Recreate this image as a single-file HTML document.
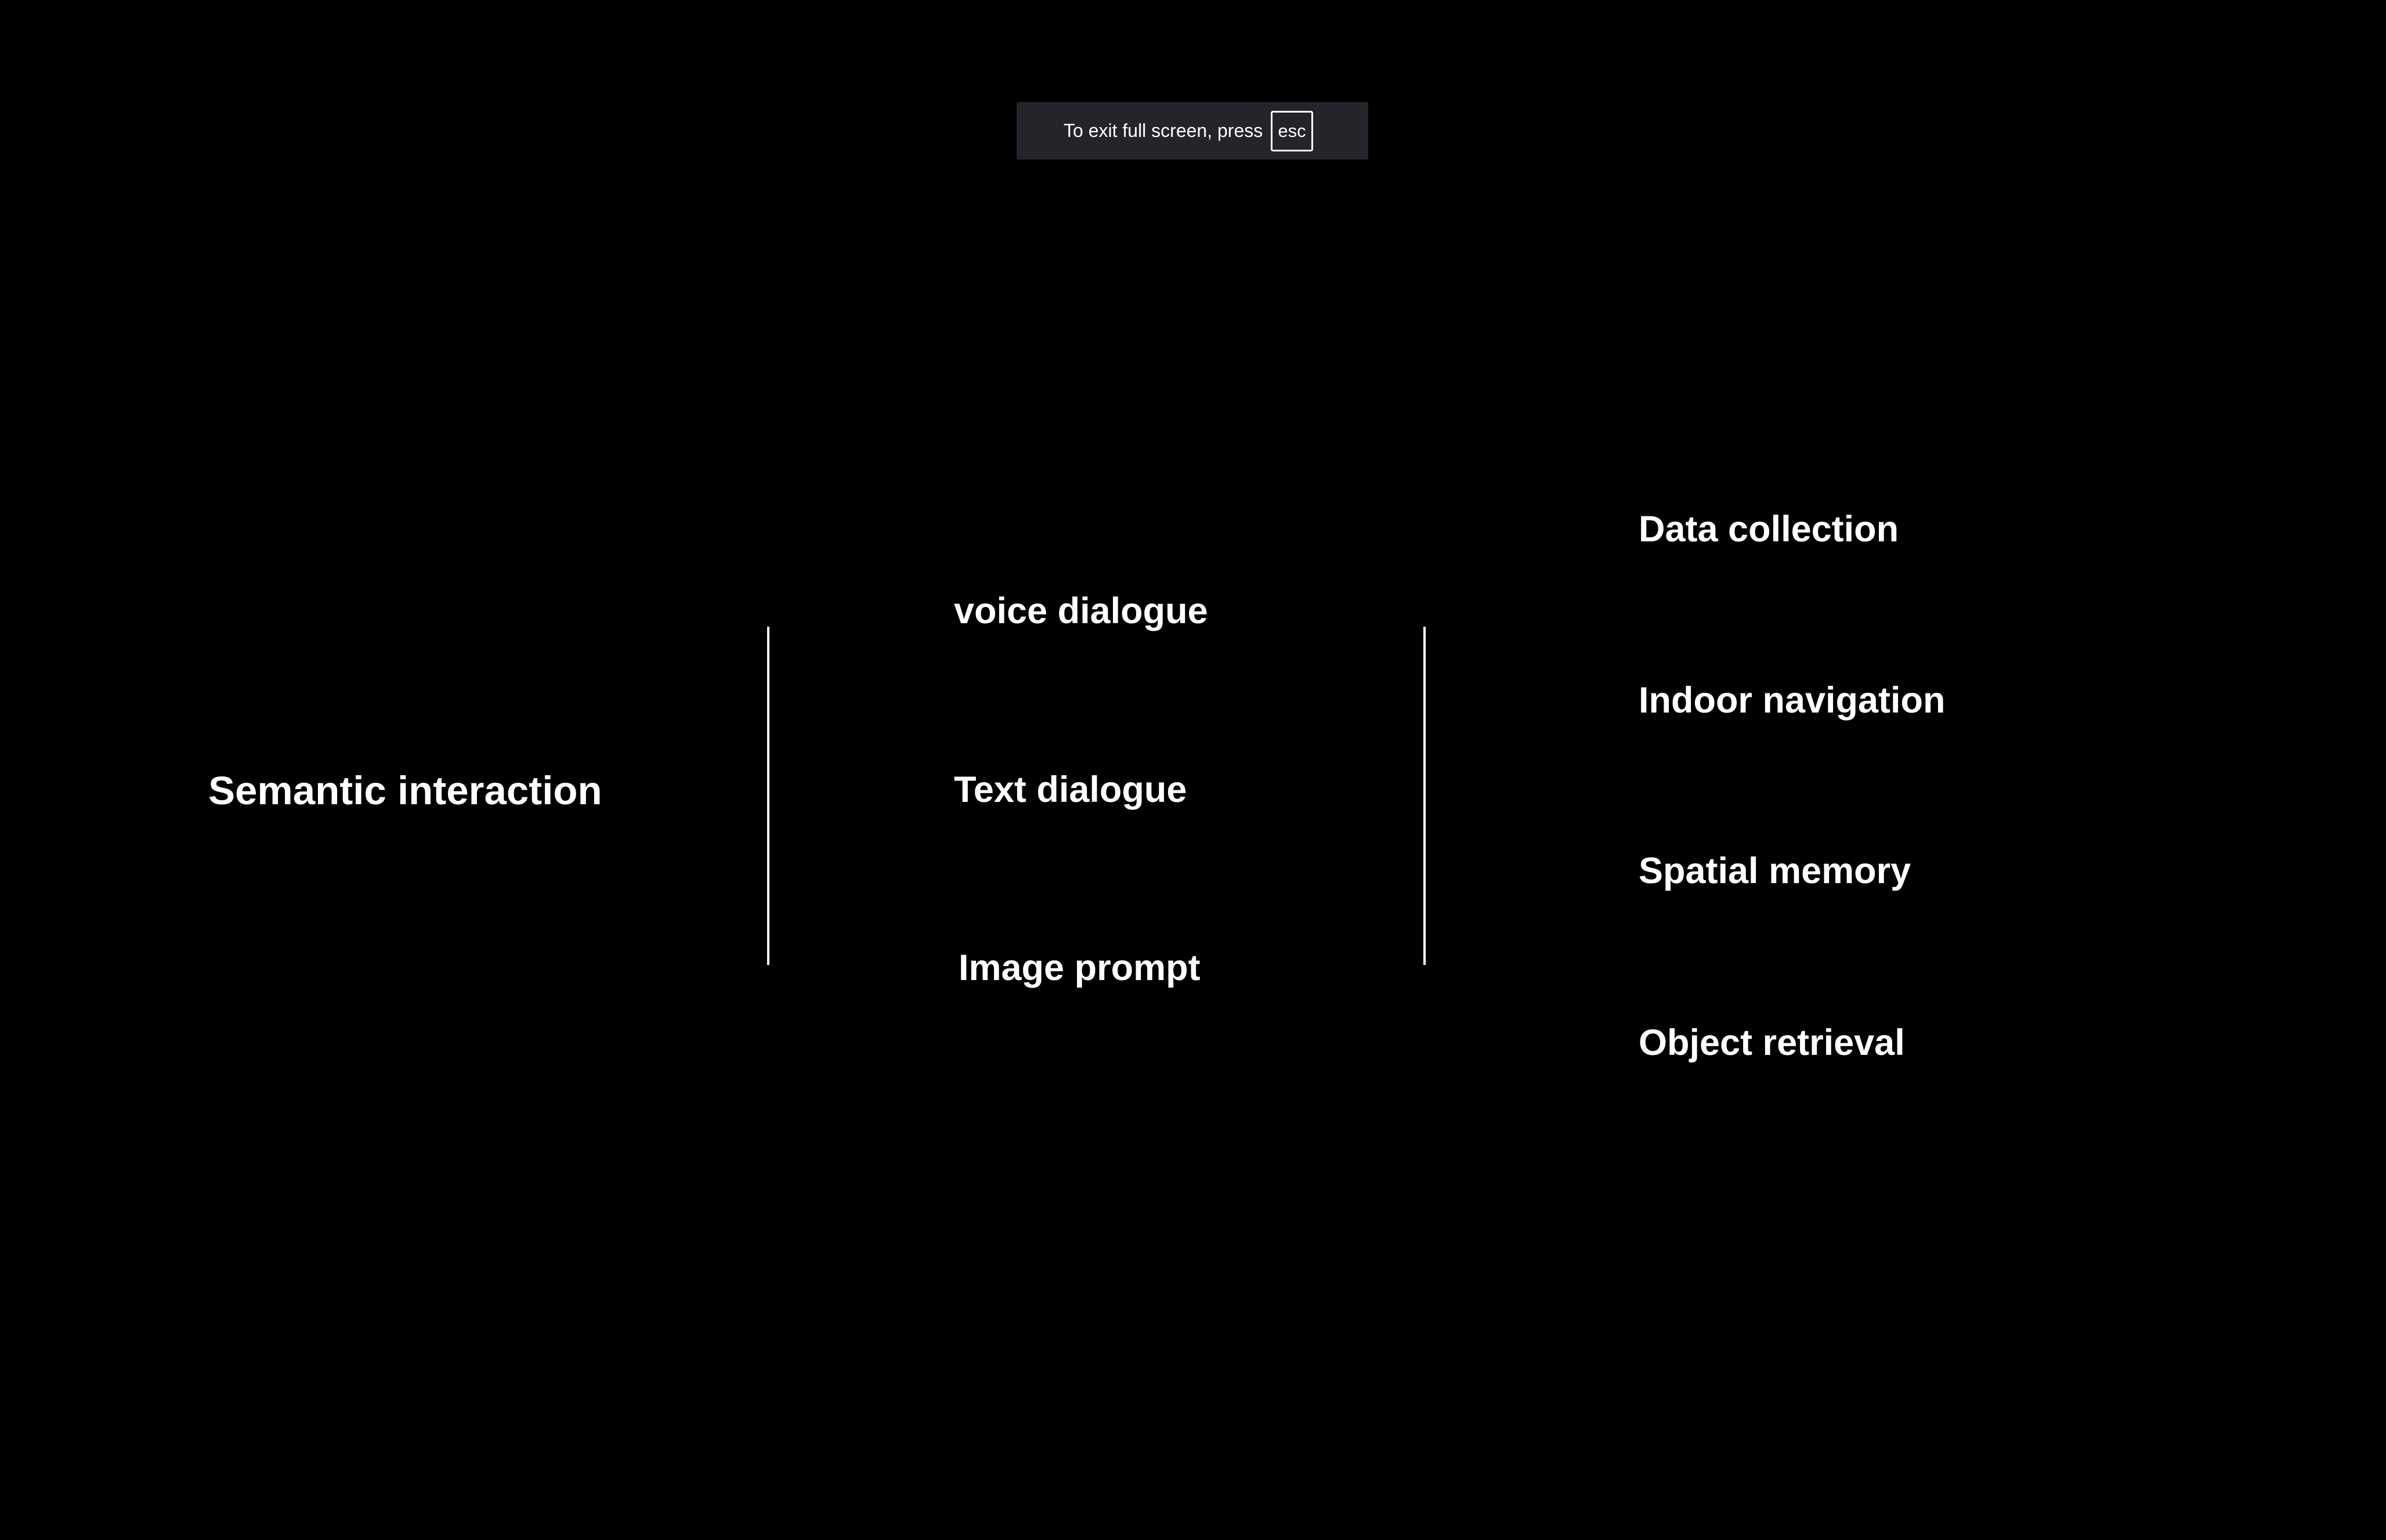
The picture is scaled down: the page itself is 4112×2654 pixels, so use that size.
<!DOCTYPE html>
<html><head><meta charset="utf-8"><style>
html,body{margin:0;padding:0;background:#000;}
body{width:4112px;height:2654px;position:relative;overflow:hidden;font-family:"Liberation Sans",Arial,sans-serif;color:#fff;}
.t{position:absolute;font-weight:bold;font-size:63px;line-height:62px;white-space:nowrap;}
.l{position:absolute;width:4px;background:#fff;top:1080px;height:583px;}
.toast{position:absolute;left:1752px;top:176px;width:606px;height:99px;background:#24252a;}
.toast span{position:absolute;left:81px;top:0;line-height:99px;font-size:32px;color:#fff;}
.esc{position:absolute;left:438px;top:15px;width:67px;height:64px;border:3px solid #fff;border-radius:4px;font-size:31px;line-height:64px;text-align:center;}
</style></head><body>
<div class="toast"><span>To exit full screen, press</span><div class="esc">esc</div></div>
<div class="t" style="left:359px;top:1329px;font-size:69px;line-height:68px;">Semantic interaction</div>
<div class="l" style="left:1322px"></div>
<div class="l" style="left:2453px"></div>
<div class="t" style="left:1644px;top:1022px;">voice dialogue</div>
<div class="t" style="left:1644px;top:1330px;">Text dialogue</div>
<div class="t" style="left:1652px;top:1637px;">Image prompt</div>
<div class="t" style="left:2824px;top:881px;">Data collection</div>
<div class="t" style="left:2824px;top:1176px;">Indoor navigation</div>
<div class="t" style="left:2824px;top:1470px;">Spatial memory</div>
<div class="t" style="left:2824px;top:1766px;">Object retrieval</div>
</body></html>
